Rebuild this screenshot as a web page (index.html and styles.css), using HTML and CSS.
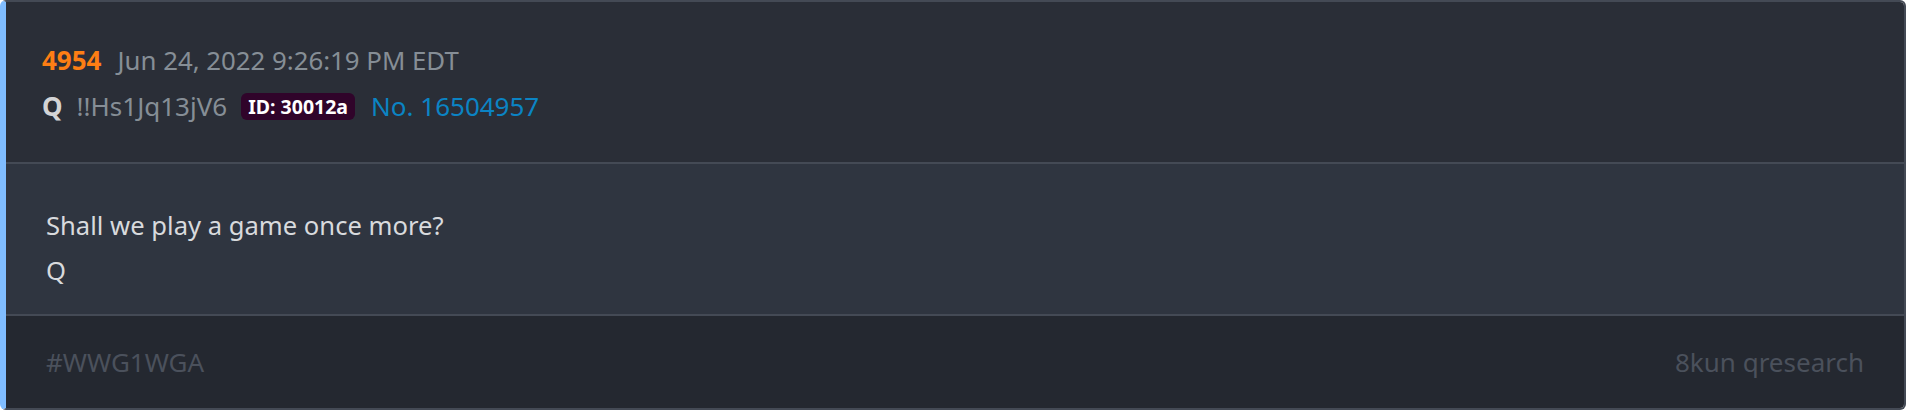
FILE: index.html
```html
<!DOCTYPE html>
<html>
<head>
    <title>Q Drop 4954</title>
    <link rel="stylesheet" href="styles.css">
</head>
<body>
    <div class="post-card">
        <div class="post-header">
            <div class="post-line">
                <span class="post-num">4954</span>
                <span class="post-date">Jun 24, 2022 9:26:19 PM EDT</span>
            </div>
            <div class="post-line">
                <span class="post-name">Q</span>
                <span class="post-trip">!!Hs1Jq13jV6</span>
                <span class="post-id">ID: 30012a</span>
                <a class="post-no" href="#">No. 16504957</a>
            </div>
        </div>

        <div class="post-body">
            <div class="post-text">Shall we play a game once more?</div>
            <div class="post-text">Q</div>
        </div>

        <div class="post-footer">
            <span class="post-tag">#WWG1WGA</span>
            <span class="post-source">8kun qresearch</span>
        </div>
    </div>
</body>
</html>
```

FILE: styles.css
```css
body {
    margin: 0;
    background-color: #ffffff;
    font-family: 'Noto Sans', 'Open Sans', sans-serif;
    font-size: 26px;
}

.post-card {
    height: 410px;
    box-sizing: border-box;
    border: 2px solid #444a55;
    border-left: 6px solid #80bdff;
    border-radius: 6px;
    overflow: hidden;
    display: flex;
    flex-direction: column;
}

.post-header {
    height: 160px;
    box-sizing: border-box;
    padding: 36px 40px 0 36px;
    background-color: #2a2e37;
    display: flex;
    flex-direction: column;
    gap: 2px;
}

.post-line {
    display: flex;
    align-items: center;
    gap: 14px;
    height: 44px;
}

.post-num {
    color: #fd7e14;
    font-weight: 700;
    margin-right: 2px;
}

.post-date,
.post-trip {
    color: #868e96;
}

.post-date {
    font-size: 25.8px;
}

.post-name {
    color: #d3d4d6;
    font-weight: 700;
}

.post-id {
    background-color: #30042a;
    color: #ffffff;
    font-size: 19.5px;
    font-weight: 700;
    line-height: 27px;
    padding: 0 7px;
    border-radius: 6px;
}

.post-no {
    color: #0b84c4;
    text-decoration: none;
    margin-left: 2px;
}

.post-body {
    box-sizing: border-box;
    padding: 40px 40px 0 40px;
    background-color: #2f3540;
    border-top: 2px solid #444a55;
    border-bottom: 2px solid #444a55;
    height: 154px;
    display: flex;
    flex-direction: column;
    gap: 1px;
}

.post-text {
    color: #d8dadd;
    font-size: 25.6px;
    line-height: 44px;
}

.post-footer {
    flex: 1;
    padding: 0 40px;
    background-color: #242830;
    display: flex;
    justify-content: space-between;
    align-items: center;
    color: #4b515c;
    line-height: 44px;
}
```
